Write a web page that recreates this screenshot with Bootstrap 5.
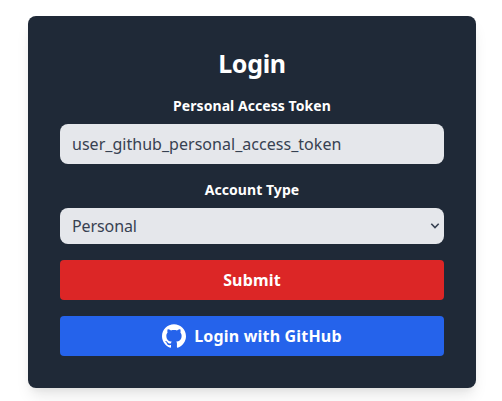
<!DOCTYPE html>
<html lang="en">
<head>
<meta charset="utf-8">
<meta name="viewport" content="width=device-width, initial-scale=1">
<title>Login</title>
<link href="https://cdn.jsdelivr.net/npm/bootstrap@5.3.0/dist/css/bootstrap.min.css" rel="stylesheet">
<style>
body{font-family:"Segoe UI","Noto Sans","Open Sans",sans-serif;background:#fff}
.login-page{height:100vh;padding:16px 0 0 28px;overflow:hidden}
.login-card{width:448px;height:372px;padding:31px 32px 32px;background:#1f2937;border:0;border-radius:8px;box-shadow:0 10px 15px -3px rgba(0,0,0,.1),0 4px 6px -2px rgba(0,0,0,.05)}
.login-title{font-size:25px;line-height:32px;letter-spacing:-.3px;padding-bottom:1px}
.login-label{font-size:14px;line-height:20px;letter-spacing:.06px}
.login-field,.login-field:focus{background-color:#e5e7eb;color:#374151;border:0;border-radius:8px;font-size:16px;line-height:24px;letter-spacing:.03px;padding:8px 12px}
select.login-field{height:36px;padding:6px 28px 6px 12px;line-height:24px;letter-spacing:-.1px;background-image:url("data:image/svg+xml,%3Csvg xmlns='http://www.w3.org/2000/svg' viewBox='0 0 10 8'%3E%3Cpath d='M1.3 1.8 5 5.6 8.7 1.8' fill='none' stroke='%23374151' stroke-width='1.6'/%3E%3C/svg%3E");background-size:10px 8px;background-position:right 4px center}
.login-btn{height:40px;border:0;border-radius:4px;font-size:16px;line-height:24px;letter-spacing:.18px;padding:8px 16px;color:#fff}
.btn-submit,.btn-submit:hover{background:#dc2626;color:#fff}
.btn-github,.btn-github:hover{background:#2563eb;color:#fff}
</style>
<script src="https://cdn.jsdelivr.net/npm/bootstrap@5.3.0/dist/js/bootstrap.bundle.min.js"></script>
</head>
<body>
<div class="login-page">
<main class="card login-card text-white">
<h2 class="login-title fw-bold text-center mb-3">Login</h2>
<form class="d-flex flex-column gap-3">
<div class="text-center">
<label class="login-label fw-bold d-block mb-2" for="token">Personal Access Token</label>
<input class="form-control login-field" id="token" type="text" value="user_github_personal_access_token">
</div>
<div class="text-center">
<label class="login-label fw-bold d-block mb-2" for="account">Account Type</label>
<select class="form-select login-field" id="account"><option>Personal</option><option>Organization</option></select>
</div>
<button class="btn login-btn btn-submit fw-bold w-100" type="button">Submit</button>
<button class="btn login-btn btn-github fw-bold w-100 d-flex align-items-center justify-content-center gap-2" type="button">
<svg width="24" height="24" viewBox="0 0 24 24" fill="currentColor" aria-hidden="true"><path d="M12 .297c-6.63 0-12 5.373-12 12 0 5.303 3.438 9.8 8.205 11.385.6.113.82-.258.82-.577 0-.285-.01-1.04-.015-2.04-3.338.724-4.042-1.61-4.042-1.61C4.422 18.07 3.633 17.7 3.633 17.7c-1.087-.744.084-.729.084-.729 1.205.084 1.838 1.236 1.838 1.236 1.07 1.835 2.809 1.305 3.495.998.108-.776.417-1.305.76-1.605-2.665-.3-5.466-1.332-5.466-5.93 0-1.31.465-2.38 1.235-3.22-.135-.303-.54-1.523.105-3.176 0 0 1.005-.322 3.3 1.23.96-.267 1.98-.399 3-.405 1.02.006 2.04.138 3 .405 2.28-1.552 3.285-1.23 3.285-1.23.645 1.653.24 2.873.12 3.176.765.84 1.23 1.91 1.23 3.22 0 4.61-2.805 5.625-5.475 5.92.42.36.81 1.096.81 2.22 0 1.606-.015 2.896-.015 3.286 0 .315.21.69.825.57C20.565 22.092 24 17.592 24 12.297c0-6.627-5.373-12-12-12"/></svg>
<span>Login with GitHub</span>
</button>
</form>
</main>
</div>
</body>
</html>
